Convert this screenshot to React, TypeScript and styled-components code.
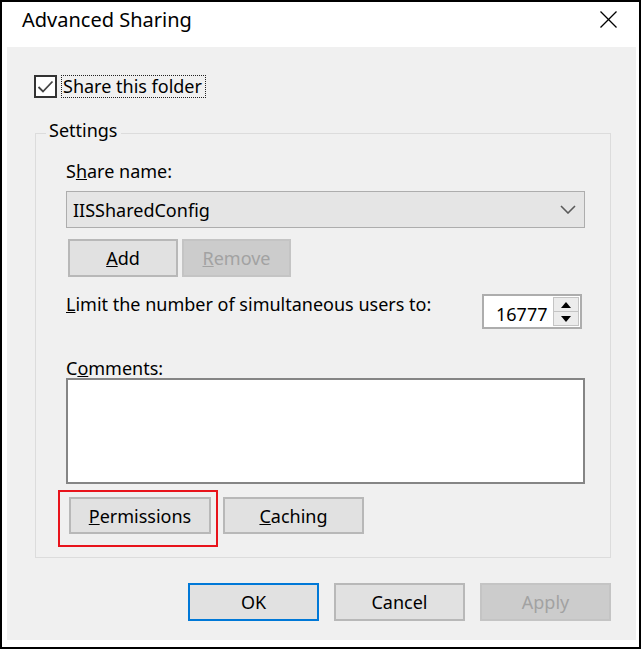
import React from "react";
import styled, { createGlobalStyle } from "styled-components";

const GlobalStyle = createGlobalStyle`
  html, body { margin: 0; padding: 0; background: #ffffff; }
  body { font-family: "Noto Sans", "Liberation Sans", sans-serif; color: #000; }
  *, *::before, *::after { box-sizing: border-box; }
`;

const Window = styled.div`
  width: 641px;
  height: 649px;
  border: 2px solid #000;
  background: #fff;
  padding: 0 3px 7px 5px;
  display: flex;
  flex-direction: column;
`;

const TitleBar = styled.div`
  height: 45px;
  flex: none;
  display: flex;
  justify-content: space-between;
  align-items: flex-start;
  padding: 3px 19px 0 15px;
`;

const Title = styled.div`
  font-size: 20px;
  line-height: 30px;
`;

const CloseGlyph = styled.svg`
  width: 17px;
  height: 17px;
  margin-top: 6px;
`;

const Client = styled.div`
  flex: 1;
  background: #f0f0f0;
  padding: 28px 25px 0 27px;
  display: flex;
  flex-direction: column;
  font-size: 18px;
`;

const CheckRow = styled.div`
  display: flex;
  align-items: center;
  gap: 4px;
  height: 23px;
`;

const CheckBox = styled.div`
  width: 23px;
  height: 23px;
  border: 2px solid #333;
  background: #fff;
  display: flex;
  align-items: center;
  justify-content: center;
`;

const FocusLabel = styled.div`
  height: 23px;
  line-height: 21px;
  border: 1px dotted #222;
  padding: 0 3px 0 1px;
  white-space: nowrap;
`;

const GroupBox = styled.div`
  position: relative;
  margin: 35px 0 0 1px;
  border: 1px solid #dcdcdc;
  padding: 27px 25px 23px 30px;
  display: flex;
  flex-direction: column;
`;

const Legend = styled.div`
  position: absolute;
  left: 10px;
  top: -16px;
  padding: 0 3px;
  background: #f0f0f0;
  line-height: 24px;
`;

const FieldLabel = styled.div<{ $gap?: number }>`
  line-height: 20px;
  height: 20px;
  white-space: nowrap;
  margin-top: ${(p) => p.$gap ?? 0}px;
`;

const Combo = styled.div`
  margin-top: 10px;
  height: 37px;
  background: #e5e5e5;
  border: 1px solid #adadad;
  display: flex;
  align-items: center;
  justify-content: space-between;
  padding: 0 8px 0 6px;
`;

const ButtonRow = styled.div<{ $gap: number; $top: number; $left: number }>`
  display: flex;
  gap: ${(p) => p.$gap}px;
  margin-top: ${(p) => p.$top}px;
  padding-left: ${(p) => p.$left}px;
`;

const PushButton = styled.button<{ $w: number; $h: number; $default?: boolean }>`
  width: ${(p) => p.$w}px;
  height: ${(p) => p.$h}px;
  font-family: inherit;
  font-size: 18px;
  color: #000;
  background: #e1e1e1;
  border: 2px solid ${(p) => (p.$default ? "#0078d7" : "#b8b8b8")};
  padding: 0;
  margin: 0;
  &:disabled {
    background: #cccccc;
    border-color: #c4c4c4;
    color: #a2a2a2;
  }
`;

const LimitRow = styled.div`
  display: flex;
  justify-content: space-between;
  align-items: flex-start;
  margin-top: 17px;
  height: 35px;
`;

const Spinner = styled.div`
  width: 100px;
  height: 35px;
  margin-right: 3px;
  border: 2px solid #adadad;
  background: #fff;
  display: flex;
  align-items: stretch;
`;

const SpinValue = styled.div`
  width: 64px;
  margin-right: 5px;
  overflow: hidden;
  white-space: nowrap;
  padding-left: 12px;
  line-height: 33px;
  padding-top: 2px;
`;

const SpinButtons = styled.div`
  width: 26px;
  margin: 1px 0;
  display: flex;
  flex-direction: column;
`;

const SpinPart = styled.div`
  flex: 1;
  background: #ececec;
  border: 1px solid #c4c4c4;
  display: flex;
  align-items: center;
  justify-content: center;
  & + & { border-top: none; }
`;

const CommentBox = styled.div`
  height: 106px;
  background: #fff;
  border: 2px solid #858585;
`;

const HighlightWrap = styled.div`
  position: relative;
  display: flex;
  &::after {
    content: "";
    position: absolute;
    left: -11px;
    top: -7px;
    width: 160px;
    height: 57px;
    border: 2px solid #e8131b;
    pointer-events: none;
  }
`;

const Footer = styled.div`
  margin-top: 25px;
  display: flex;
  justify-content: flex-end;
  gap: 15px;
`;

const Chevron = () => (
  <svg width="16" height="9" viewBox="0 0 16 9">
    <polyline points="1,1 8,8 15,1" fill="none" stroke="#5a5a5a" strokeWidth="1.6" />
  </svg>
);

const Arrow = ({ up }: { up: boolean }) => (
  <svg width="10" height="6" viewBox="0 0 10 6">
    <polygon points={up ? "5,0 10,6 0,6" : "0,0 10,0 5,6"} fill="#000" />
  </svg>
);

export default function App() {
  return (
    <>
      <GlobalStyle />
      <Window>
        <TitleBar>
          <Title>Advanced Sharing</Title>
          <CloseGlyph viewBox="0 0 17 17">
            <line x1="0.5" y1="0.5" x2="16.5" y2="16.5" stroke="#000" strokeWidth="1.3" />
            <line x1="16.5" y1="0.5" x2="0.5" y2="16.5" stroke="#000" strokeWidth="1.3" />
          </CloseGlyph>
        </TitleBar>
        <Client>
          <CheckRow>
            <CheckBox>
              <svg width="17" height="14" viewBox="0 0 17 14">
                <polyline points="1.5,7 6,11.5 15.5,1.5" fill="none" stroke="#444" strokeWidth="1.8" />
              </svg>
            </CheckBox>
            <FocusLabel>Share this folder</FocusLabel>
          </CheckRow>
          <GroupBox>
            <Legend>Settings</Legend>
            <FieldLabel>
              S<u>h</u>are name:
            </FieldLabel>
            <Combo>
              <span>IISSharedConfig</span>
              <Chevron />
            </Combo>
            <ButtonRow $gap={4} $top={11} $left={2}>
              <PushButton $w={110} $h={38}>
                <u>A</u>dd
              </PushButton>
              <PushButton $w={109} $h={38} disabled>
                <u>R</u>emove
              </PushButton>
            </ButtonRow>
            <LimitRow>
              <FieldLabel>
                <u>L</u>imit the number of simultaneous users to:
              </FieldLabel>
              <Spinner>
                <SpinValue>16777216</SpinValue>
                <SpinButtons>
                  <SpinPart>
                    <Arrow up />
                  </SpinPart>
                  <SpinPart>
                    <Arrow up={false} />
                  </SpinPart>
                </SpinButtons>
              </Spinner>
            </LimitRow>
            <FieldLabel $gap={29}>
              C<u>o</u>mments:
            </FieldLabel>
            <CommentBox />
            <ButtonRow $gap={12} $top={13} $left={3}>
              <HighlightWrap>
                <PushButton $w={142} $h={37}>
                  <u>P</u>ermissions
                </PushButton>
              </HighlightWrap>
              <PushButton $w={141} $h={37}>
                <u>C</u>aching
              </PushButton>
            </ButtonRow>
          </GroupBox>
          <Footer>
            <PushButton $w={131} $h={38} $default>
              OK
            </PushButton>
            <PushButton $w={131} $h={38}>
              Cancel
            </PushButton>
            <PushButton $w={131} $h={38} disabled>
              Apply
            </PushButton>
          </Footer>
        </Client>
      </Window>
    </>
  );
}
